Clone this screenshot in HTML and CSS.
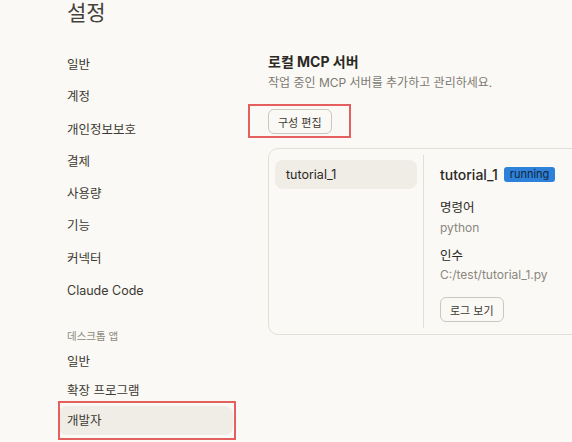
FILE: index.html
```html
<!DOCTYPE html>
<html lang="ko">
<head>
<meta charset="utf-8">
<title>설정</title>
<link rel="stylesheet" href="styles.css">
</head>
<body>
<div class="page">
  <aside class="sidebar">
    <h1 class="title">설정</h1>
    <nav class="nav">
      <div class="nav-group">
        <a class="nav-item">일반</a>
        <a class="nav-item">계정</a>
        <a class="nav-item">개인정보보호</a>
        <a class="nav-item">결제</a>
        <a class="nav-item">사용량</a>
        <a class="nav-item">기능</a>
        <a class="nav-item">커넥터</a>
        <a class="nav-item">Claude Code</a>
      </div>
      <div class="nav-label">데스크톱 앱</div>
      <div class="nav-group small">
        <a class="nav-item">일반</a>
        <a class="nav-item">확장 프로그램</a>
        <a class="nav-item active marked">개발자</a>
      </div>
    </nav>
  </aside>
  <main class="main">
    <h2 class="heading">로컬 MCP 서버</h2>
    <p class="subtitle">작업 중인 MCP 서버를 추가하고 관리하세요.</p>
    <div class="actions">
      <button class="btn marked-btn">구성 편집</button>
    </div>
    <section class="card">
      <div class="server-list">
        <div class="server-item">tutorial_1</div>
      </div>
      <div class="divider"></div>
      <div class="detail">
        <div class="detail-head">
          <span class="detail-name">tutorial_1</span>
          <span class="badge">running</span>
        </div>
        <div class="field-label">명령어</div>
        <div class="field-value">python</div>
        <div class="field-label second">인수</div>
        <div class="field-value">C:/test/tutorial_1.py</div>
        <button class="btn log-btn">로그 보기</button>
      </div>
    </section>
  </main>
</div>
</body>
</html>
```

FILE: styles.css
```css
* { box-sizing: border-box; }

html, body {
  margin: 0;
  padding: 0;
  background: #faf9f5;
  overflow: hidden;
}

body {
  width: 572px;
  height: 442px;
  font-family: "Inter", "Noto Sans CJK KR", sans-serif;
  color: #3d3a33;
}

.page {
  display: grid;
  grid-template-columns: 174px 1fr;
  column-gap: 35px;
  padding-left: 59px;
}

.title {
  margin: 0;
  padding-left: 8px;
  height: 26px;
  font-size: 21px;
  line-height: 26px;
  font-weight: 400;
  color: #45423b;
}

.nav {
  margin-top: 23px;
  display: flex;
  flex-direction: column;
}

.nav-group {
  display: flex;
  flex-direction: column;
}

.nav-item {
  display: block;
  padding: 0 8px;
  height: 32.3px;
  line-height: 32.3px;
  font-size: 12.5px;
  color: #3d3a33;
}

.nav-group.small .nav-item {
  height: 29px;
  line-height: 29px;
}

.nav-label {
  margin-top: 20px;
  padding: 0 8px;
  height: 20px;
  line-height: 20px;
  font-size: 10.5px;
  color: #8c8980;
}

.nav-item.active {
  background: #f0ede6;
  border-radius: 8px;
  height: 28px;
  line-height: 28px;
  margin-top: 1px;
}

.marked, .marked-btn {
  position: relative;
}

.marked::after {
  content: "";
  position: absolute;
  top: -5px;
  bottom: -5px;
  left: -1px;
  right: -3px;
  border: 2px solid rgba(222, 52, 52, 0.78);
  pointer-events: none;
}

.marked-btn::after {
  content: "";
  position: absolute;
  top: -6px;
  bottom: -5px;
  left: -21px;
  right: -20px;
  border: 2px solid rgba(222, 52, 52, 0.78);
  pointer-events: none;
}

.main {
  padding-top: 52px;
  min-width: 0;
}

.heading {
  margin: 0;
  height: 20px;
  line-height: 20px;
  font-size: 14px;
  font-weight: 700;
  color: #2b2924;
}

.subtitle {
  margin: 1.5px 0 0;
  height: 18px;
  line-height: 18px;
  font-size: 12px;
  color: #7d7a72;
}

.actions {
  margin-top: 17.5px;
  display: flex;
}

.btn {
  font-family: inherit;
  height: 25px;
  padding: 0 9px;
  background: #faf9f5;
  border: 1px solid #cbc8bf;
  border-radius: 6px;
  font-size: 11px;
  color: #3d3a33;
}

.card {
  margin-top: 14px;
  width: 330px;
  border: 1px solid #e2dfd7;
  border-radius: 10px;
  padding: 6px;
  display: flex;
}

.server-list {
  width: 142px;
  padding-top: 5px;
}

.server-item {
  height: 29px;
  line-height: 29px;
  padding-left: 11px;
  border-radius: 8px;
  background: #f0ede6;
  font-size: 12.5px;
  color: #2b2924;
}

.divider {
  width: 1px;
  margin-left: 6px;
  background: #e2dfd7;
}

.detail {
  padding: 7.5px 0 6px 16px;
  display: flex;
  flex-direction: column;
  align-items: flex-start;
}

.detail-head {
  height: 24px;
  display: flex;
  align-items: center;
  gap: 6px;
}

.detail-name {
  font-size: 14px;
  font-weight: 500;
  color: #2b2924;
}

.badge {
  background: #2d81d9;
  color: #13253d;
  font-size: 11px;
  line-height: 15px;
  height: 15px;
  padding: 0 6px;
  border-radius: 3px;
}

.field-label {
  margin-top: 12.5px;
  height: 18px;
  line-height: 18px;
  font-size: 12.5px;
  color: #2b2924;
}

.field-label.second {
  margin-top: 10px;
}

.field-value {
  margin-top: 1.5px;
  height: 18px;
  line-height: 18px;
  font-size: 12px;
  color: #8a877e;
}

.log-btn {
  margin-top: 13px;
}
```
